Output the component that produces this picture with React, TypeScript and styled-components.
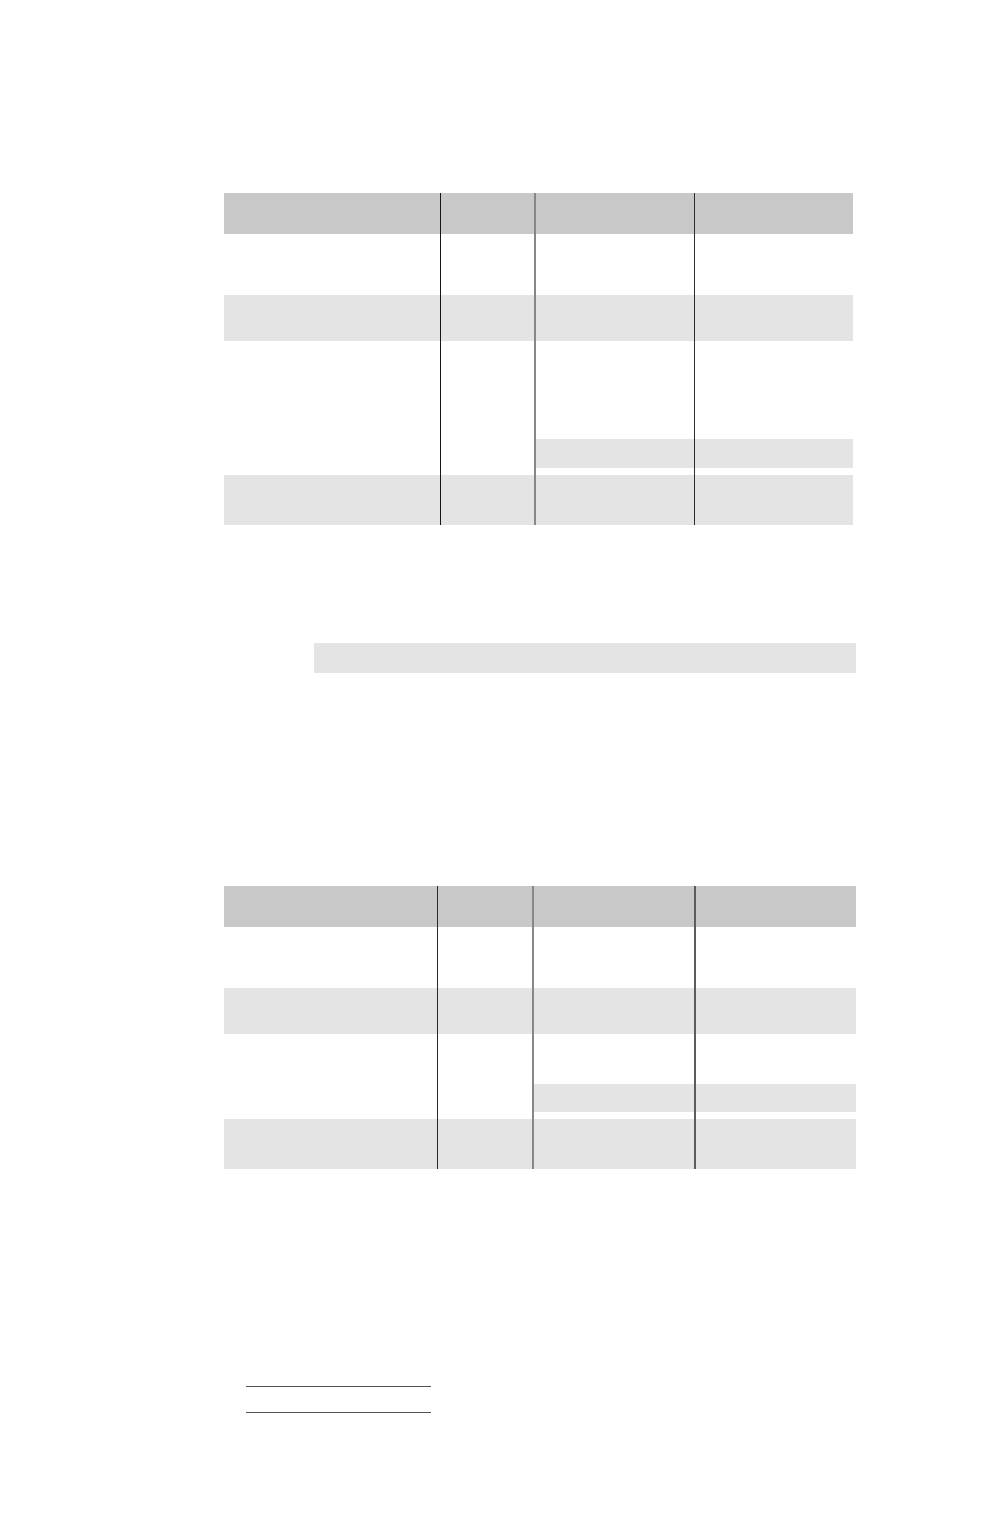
import React from 'react';
import styled, { createGlobalStyle } from 'styled-components';

const GlobalStyle = createGlobalStyle`
  html, body {
    margin: 0;
    padding: 0;
    background: #ffffff;
    font-family: "Liberation Sans", Arial, sans-serif;
  }
`;

const Page = styled.div`
  width: 1000px;
  min-height: 1528px;
  box-sizing: border-box;
  padding: 193px 0 0 224px;
  display: flex;
  flex-direction: column;
  align-items: flex-start;
`;

const Table = styled.div<{ $cols: string; $rows: string }>`
  display: grid;
  grid-template-columns: ${({ $cols }) => $cols};
  grid-template-rows: ${({ $rows }) => $rows};
`;

const Cell = styled.div<{ $bg?: string; $line?: string; $lineWidth?: number }>`
  box-sizing: border-box;
  background: ${({ $bg }) => $bg || 'transparent'};
  border-left: ${({ $line, $lineWidth }) => ($line ? `${$lineWidth || 1}px solid ${$line}` : 'none')};
  display: flex;
  flex-direction: column;
`;

const Band = styled.div<{ $top: number; $height: number }>`
  margin-top: ${({ $top }) => $top}px;
  height: ${({ $height }) => $height}px;
  background: #e4e4e4;
`;

const NoteBar = styled.div`
  margin: 118px 0 0 90px;
  width: 542px;
  height: 30px;
  background: #e4e4e4;
`;

const Gap = styled.div<{ $h: number }>`
  height: ${({ $h }) => $h}px;
`;

const Rule = styled.div<{ $top: number }>`
  margin: ${({ $top }) => $top}px 0 0 22px;
  width: 185px;
  height: 1px;
  background: #55554c;
`;

const HEADER = '#c8c8c8';
const SHADE = '#e4e4e4';

type LineSpec = { color: string; width: number };

interface BlockProps {
  cols: string;
  lines: LineSpec[];
  splitTop: number;
  splitHeight: number;
  row3: number;
}

const DataTable: React.FC<BlockProps> = ({ cols, lines, splitTop, splitHeight, row3 }) => {
  const rows = [
    { bg: HEADER, split: false },
    { bg: undefined, split: false },
    { bg: SHADE, split: false },
    { bg: undefined, split: true },
    { bg: SHADE, split: false },
  ];

  return (
    <Table $cols={cols} $rows={`41px 61px 46px ${row3}px 50px`}>
      {rows.map((row, r) =>
        [0, 1, 2, 3].map((c) => {
          const line = c > 0 ? lines[c - 1] : undefined;
          return (
            <Cell
              key={`${r}-${c}`}
              $bg={row.bg}
              $line={line?.color}
              $lineWidth={line?.width}
            >
              {row.split && c >= 2 && <Band $top={splitTop} $height={splitHeight} />}
            </Cell>
          );
        })
      )}
    </Table>
  );
};

const App: React.FC = () => {
  return (
    <>
      <GlobalStyle />
      <Page>
        <DataTable
          cols="216px 94px 160px 159px"
          lines={[
            { color: '#161616', width: 1 },
            { color: '#8a8783', width: 2 },
            { color: '#2f2d2a', width: 1 },
          ]}
          row3={134}
          splitTop={98}
          splitHeight={29}
        />

        <NoteBar />

        <Gap $h={213} />

        <DataTable
          cols="213px 95px 162px 162px"
          lines={[
            { color: '#2a2824', width: 1 },
            { color: '#8a8783', width: 2 },
            { color: '#5f5c57', width: 2 },
          ]}
          row3={85}
          splitTop={50}
          splitHeight={28}
        />

        <Rule $top={217} />
        <Rule $top={25} />
      </Page>
    </>
  );
};

export default App;
